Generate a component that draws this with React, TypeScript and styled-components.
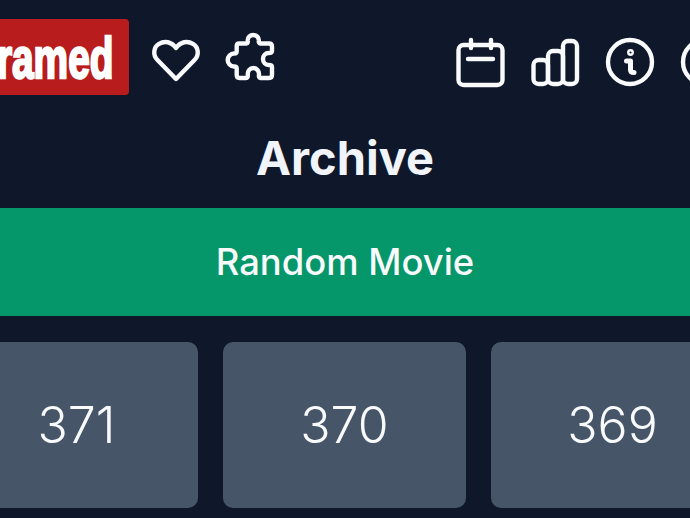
import React from 'react';
import styled, { createGlobalStyle } from 'styled-components';

const GlobalStyle = createGlobalStyle`
  html, body {
    margin: 0;
    padding: 0;
    background: #0f172a;
  }
  body {
    font-family: Inter, "Liberation Sans", sans-serif;
    color: #f8fafc;
  }
`;

const Heart = () => (
  <Icon viewBox="0 0 48 48">
    <path d="M24 41 L5.5 22 C0.5 17 1.5 9 7 5.8 C12.5 2.5 19.5 3.5 24 10 C28.5 3.5 35.5 2.5 41 5.8 C46.5 9 47.5 17 42.5 22 Z" />
  </Icon>
);

const Puzzle = () => (
  <Icon viewBox="0 0 48 48">
    <path d="M13 5.5 H20.5 C21.8 5.5 22 4 21.8 2.5 C21.5 -0.5 24 -3 27.3 -3 C30.5 -3 33 -0.5 32.8 2.5 C32.6 4 33 5.5 34.5 5.5 H43 Q46 5.5 46 8.5 V13 C46 15 44.5 15 42.5 15 C39.5 15 37 17.5 37 21 C37 24.5 39.5 27 42.5 27 C44.5 27 46 27 46 29 V37 Q46 40 43 40 H34.5 C33 40 32.8 38.5 33 36.5 C33.3 33 30.5 30 27.3 30 C24 30 21.5 33 21.8 36.5 C22 38.5 21.5 40 20 40 H13.5 Q10.7 40 10.7 37 V30.5 C10.7 28.8 9.5 28.5 8 28.5 C4.5 28.5 1.7 25.5 1.7 22 C1.7 18.5 4.5 15.5 8 15.5 C9.5 15.5 10.7 15 10.7 13.5 V8 Q10.7 5.5 13 5.5 Z" />
  </Icon>
);

const Calendar = () => (
  <Icon viewBox="0 0 48 48">
    <rect x="2.5" y="7" width="44" height="40" rx="5" />
    <path d="M15 2 V10 M35 2 V10 M12 21 H37" />
  </Icon>
);

const Bars = () => (
  <Icon viewBox="0 0 48 48">
    <rect x="2.5" y="22" width="14.5" height="24" rx="5" />
    <rect x="17" y="13" width="15" height="33" rx="5" />
    <rect x="32" y="3" width="14" height="43" rx="5" />
  </Icon>
);

const Info = () => (
  <Icon viewBox="0 0 48 48">
    <circle cx="24" cy="24" r="22" />
    <path d="M20.5 23 H24.5 V32 Q24.5 34.5 28 34.5" strokeWidth="5" />
    <circle cx="24.5" cy="14.5" r="1.2" strokeWidth="4.5" />
  </Icon>
);

const Help = () => (
  <Icon viewBox="0 0 48 48">
    <circle cx="24" cy="24" r="22" />
    <path d="M17 18 C17 10 31 10 31 18 C31 23 24 23 24 29 M24 36 V36.1" />
  </Icon>
);

const numbers = [371, 370, 369];

export default function App() {
  return (
    <Page>
      <GlobalStyle />
      <Header>
        <Group $gap={26}>
          <Logo><LogoText>Framed</LogoText></Logo>
          <Heart />
          <Puzzle />
        </Group>
        <Group $gap={27}>
          <Calendar />
          <Bars />
          <Info />
          <Help />
        </Group>
      </Header>
      <Title>Archive</Title>
      <RandomBar>Random Movie</RandomBar>
      <Grid>
        {numbers.map((n) => (
          <Tile key={n}>{n}</Tile>
        ))}
      </Grid>
    </Page>
  );
}

const Page = styled.div`
  width: 690px;
  height: 518px;
  overflow: hidden;
  background: #0f172a;
`;

const Header = styled.header`
  display: flex;
  justify-content: space-between;
  align-items: flex-start;
  width: 790px;
  height: 76px;
  margin-left: -61px;
  padding-top: 19px;
`;

const Group = styled.div<{ $gap: number }>`
  display: flex;
  align-items: flex-start;
  gap: ${(props) => props.$gap}px;
`;

const Logo = styled.div`
  display: flex;
  align-items: center;
  justify-content: flex-end;
  box-sizing: border-box;
  width: 190px;
  height: 76px;
  padding-right: 15px;
  margin-right: -3px;
  background: #b91c1c;
  border-radius: 4px;
`;

const LogoText = styled.span`
  flex-shrink: 0;
  font-family: "Liberation Sans", sans-serif;
  font-weight: 700;
  font-size: 58px;
  color: #fff;
  transform: scaleX(0.67);
  transform-origin: right center;
  -webkit-text-stroke: 2.5px #fff;
`;

const Icon = styled.svg`
  flex-shrink: 0;
  width: 48px;
  height: 48px;
  margin-top: 19px;
  overflow: visible;
  fill: none;
  stroke: #f8fafc;
  stroke-width: 4.4;
  stroke-linecap: round;
  stroke-linejoin: round;
`;

const Title = styled.h1`
  margin: 0;
  padding-top: 12px;
  height: 113px;
  box-sizing: border-box;
  display: flex;
  align-items: center;
  justify-content: center;
  font-size: 47px;
  font-weight: 700;
  color: #f1f5f9;
`;

const RandomBar = styled.div`
  display: flex;
  align-items: center;
  justify-content: center;
  height: 108px;
  background: #059669;
  font-size: 36.4px;
  font-weight: 500;
  color: #f8fafc;
`;

const Grid = styled.div`
  display: grid;
  grid-template-columns: repeat(3, 243px);
  gap: 25px;
  width: 779px;
  margin: 26px 0 0 -45px;
`;

const Tile = styled.div`
  display: flex;
  align-items: center;
  justify-content: center;
  height: 166px;
  background: #475569;
  border-radius: 10px;
  font-size: 50px;
  font-weight: 300;
  color: #f8fafc;
`;
